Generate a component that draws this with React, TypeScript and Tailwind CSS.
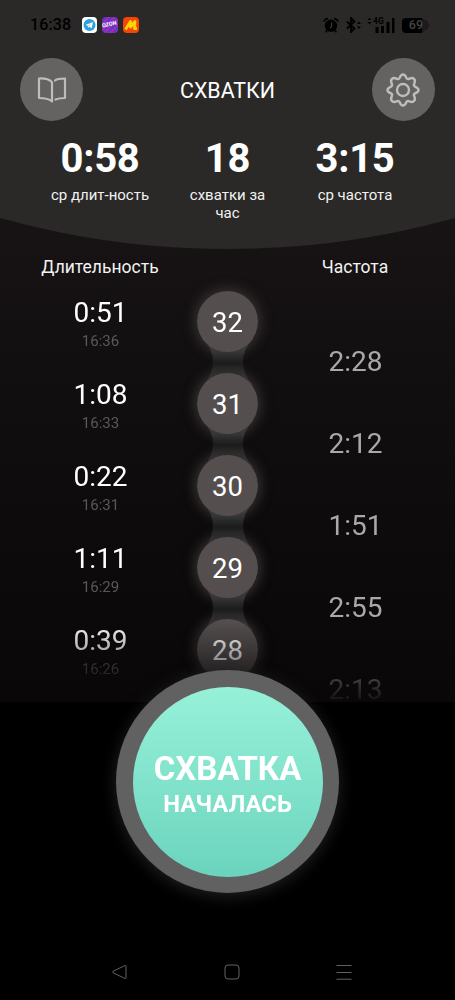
import React from "react";

const rows = [
  { n: 32, duration: "0:51", time: "16:36", gap: "2:28" },
  { n: 31, duration: "1:08", time: "16:33", gap: "2:12" },
  { n: 30, duration: "0:22", time: "16:31", gap: "1:51" },
  { n: 29, duration: "1:11", time: "16:29", gap: "2:55" },
  { n: 28, duration: "0:39", time: "16:26", gap: "2:13" },
];

function StatusBar() {
  return (
    <div className="flex h-[50px] items-center pl-[30px] pr-[25px] text-black">
      <span className="w-[52px] text-[16px] leading-none font-medium tracking-[0.1px]">16:38</span>
      <div className="flex gap-[5px]">
        <svg width="15" height="16" viewBox="0 0 15 16">
          <rect width="15" height="16" rx="4" fill="#fff" />
          <circle cx="7.5" cy="8" r="6" fill="#2ea0da" />
          <path d="M3.5 8 11 5l-1.3 6.3-2.5-1.6-1.1 1.1-.3-2z" fill="#fff" />
          <path d="m5.8 8.8 3.5-2.4-2.7 3z" fill="#8ac8ea" />
        </svg>
        <div className="flex h-4 w-[15.5px] items-center justify-center overflow-hidden rounded bg-[repeating-linear-gradient(135deg,#a32bb0_0_2px,#5b37cf_2px_4px)]">
          <span className="-rotate-12 text-[5.5px] leading-none font-bold text-white">OZON</span>
        </div>
        <svg width="16" height="16" viewBox="0 0 16 16">
          <rect width="16" height="16" rx="4" fill="#f5450b" />
          <path d="M2.500 12.500 7.500 4.500V10L12 4.500 11.500 11.500H14" fill="none" stroke="#ffd500" strokeWidth="2.800" strokeLinejoin="round" />
        </svg>
      </div>
      <div className="ml-auto flex items-center">
        <svg width="16" height="16" viewBox="0 0 16 16">
          <circle cx="8" cy="8.8" r="6.2" fill="#000" />
          <path d="M.9 4.6Q2 1.8 5 1.5M15.1 4.6Q14 1.8 11 1.5M4 13.5l-1.4 1.9M12 13.5l1.4 1.9" stroke="#000" strokeWidth="1.6" fill="none" />
          <path d="M8.6 5.5v4L7 11" stroke="#3a3a38" strokeWidth="1.2" fill="none" />
        </svg>
        <svg className="ml-[7px]" width="16" height="16" viewBox="0 0 16 16">
          <path d="m1 4.5 7.5 7L5 15V1l3.5 3.5-7.5 7" stroke="#000" strokeWidth="1.8" fill="none" />
          <path d="m11 7 2-2.5L15 7zm0 2.5h4L13 12z" fill="#000" />
        </svg>
        <svg className="ml-[5px]" width="28" height="16" viewBox="0 0 28 16">
          <path d="M.5 3 2.5.8 4.500 3zm0 2h4l-2 2.200z" fill="#000" />
          <text x="6" y="7" fontSize="8.5" fontWeight="700" fill="#000" fontFamily="Roboto, sans-serif">4G</text>
          <path d="M8.500 10h3v6h-3zM14 9h3v7h-3zM19.500 5h3v11h-3zM25 1h2.500v15H25z" fill="#000" />
        </svg>
        <div className="ml-[7px] flex items-center">
          <div className="flex h-[15px] w-[23px] items-center justify-end overflow-hidden rounded-[4px] bg-[linear-gradient(90deg,#000_20px,#1d1b1c_20px)] text-[12.5px] leading-none font-medium text-[#454543]">
            <span className="pr-[2px]">69</span>
          </div>
          <svg width="5" height="10" viewBox="0 0 5 10"><path d="M0 0h2l2.500 5L2 10H0z" fill="#1d1b1c" /></svg>
        </div>
      </div>
    </div>
  );
}

function Stat({ value, label }: { value: string; label: string }) {
  return (
    <div className="flex w-[127.5px] flex-col items-center">
      <span className="text-[40px] leading-[48px] font-bold tracking-[-0.3px]">{value}</span>
      <span className="mt-[3px] w-[100px] text-center text-[15px] leading-[18px] text-[#f2f2f2]">{label}</span>
    </div>
  );
}

function Connector() {
  return (
    <svg className="absolute -top-[34px] left-1/2 -z-10 -translate-x-1/2" width="52" height="46" viewBox="0 0 52 46">
      <defs>
        <linearGradient id="neck" x1="0" y1="0" x2="0" y2="1">
          <stop offset="0" stopColor="#454242" />
          <stop offset=".28" stopColor="#363636" />
          <stop offset=".4" stopColor="#272828" />
          <stop offset=".53" stopColor="#1b1b1b" />
          <stop offset=".64" stopColor="#282727" />
          <stop offset="1" stopColor="#3e3a3a" />
        </linearGradient>
      </defs>
      <path d="M1 0Q11 10 11 23T1 46H51Q41 36 41 23T51 0Z" fill="url(#neck)" />
    </svg>
  );
}

export default function App() {
  return (
    <div className="relative flex h-[1000px] w-[455px] flex-col overflow-hidden bg-black font-[Roboto,sans-serif] text-white">
      <div className="flex h-[702px] flex-col bg-[linear-gradient(180deg,#181415_210px,#110e0f_400px,#090708_702px)]">
        <header className="h-[249px] shrink-0 bg-[#2a2927] [clip-path:circle(850px_at_50%_-601px)]">
          <StatusBar />
          <div className="flex items-start justify-between px-[20.4px] pt-[8px]">
            <button className="flex size-[63px] items-center justify-center rounded-full bg-[#646361]">
              <svg width="30" height="28" viewBox="0 0 30 28" fill="none" stroke="#bebdbc" strokeWidth="2.200" strokeLinecap="round" strokeLinejoin="round">
                <path d="M15 25.500Q11 22 2 22V2.500Q11 2 15 6.200Z" />
                <path d="M18 4.500Q20 2.500 28 2.500V22Q22 22 18.500 23.500" />
              </svg>
            </button>
            <h1 className="mt-[20px] text-[21.4px] leading-[26px]">СХВАТКИ</h1>
            <button className="flex size-[63px] items-center justify-center rounded-full bg-[#646361]">
              <svg width="34" height="34" viewBox="0 0 34 34" fill="none" stroke="#bebdbc" strokeWidth="2.400" strokeLinejoin="round">
                <path d="M17 1.500C19 1.500 19.500 3 20.400 5C21 6.200 22 6.400 23.500 5.700C25.500 4.800 27 4.800 28 6C29.200 7 29.200 8.500 28.300 10.500C27.600 12 27.800 13 29 13.600C31 14.500 32.500 15 32.500 17C32.500 19 31 19.500 29 20.400C27.800 21 27.600 22 28.300 23.500C29.200 25.500 29.200 27 28 28C27 29.200 25.500 29.200 23.500 28.300C22 27.600 21 27.800 20.400 29C19.500 31 19 32.500 17 32.500C15 32.500 14.500 31 13.600 29C13 27.800 12 27.600 10.500 28.300C8.500 29.200 7 29.200 6 28C4.800 27 4.800 25.500 5.700 23.500C6.400 22 6.200 21 5 20.400C3 19.500 1.500 19 1.500 17C1.500 15 3 14.500 5 13.600C6.200 13 6.400 12 5.700 10.500C4.800 8.500 4.800 7 6 6C7 4.800 8.500 4.800 10.500 5.700C12 6.400 13 6.200 13.600 5C14.500 3 15 1.500 17 1.500Z" />
                <circle cx="17" cy="17" r="6" />
              </svg>
            </button>
          </div>
          <div className="mt-[14px] flex justify-center">
            <Stat value="0:58" label="ср длит-ность" />
            <Stat value="18" label="схватки за час" />
            <Stat value="3:15" label="ср частота" />
          </div>
        </header>
        <div className="flex h-[42px] shrink-0 justify-between px-[36px] pt-[7px] text-[17.500px] leading-[22px] text-[#f2f2f2]">
          <span className="w-[128px] text-center">Длительность</span>
          <span className="w-[128px] text-center">Частота</span>
        </div>
        <div className="isolate -mt-[24px] flex h-[444px] shrink-0 flex-col pt-[24px] [mask-image:linear-gradient(180deg,#000_355px,#0000_440px)]">
          {rows.map((row, i) => (
            <div key={row.n} className="flex h-[82px] shrink-0 justify-between px-[36px]">
              <div className="flex w-[128px] flex-col items-center pt-[4px]">
                <span className="pl-px text-[28px] leading-[36px]">{row.duration}</span>
                <span className="mt-[1px] pl-px text-[15px] leading-[18px] text-[#5a5858]">{row.time}</span>
              </div>
              <div className="relative h-[61px] w-[61px]">
                <div className="absolute inset-0 -z-20 rounded-full shadow-[0_0_12px_3px_#353131]" />
                {i > 0 && <Connector />}
                <div className="flex size-[61px] items-center justify-center rounded-full bg-[#544e4e] pt-[3px] text-[27.5px] leading-none">{row.n}</div>
              </div>
              <div className="flex w-[128px] justify-center pt-[53px]">
                <span className="pl-px text-[28px] leading-[36px] text-[#aaa8a8]">{row.gap}</span>
              </div>
            </div>
          ))}
        </div>
      </div>
      <div className="absolute left-[116px] top-[670px] flex size-[223px] items-center justify-center rounded-full bg-[#616161] shadow-[0_3px_16px_0_#222222]">
        <button className="flex size-[190px] flex-col items-center justify-center rounded-full bg-linear-to-b from-[#97f1d9] to-[#6bd4bd] pt-[7px] font-bold">
          <span className="text-[33px] leading-[37px]">СХВАТКА</span>
          <span className="text-[23.8px] leading-[34px]">НАЧАЛАСЬ</span>
        </button>
      </div>
      <nav className="mt-auto flex h-[56px] items-center justify-between pl-[111px] pr-[103px]">
        <svg width="16" height="16" viewBox="0 0 16 16" fill="none" stroke="#626262"><path d="M14 1.500 2 7.300Q1 8 2 8.700L14 14.500Q15 14.700 15 13.500V2.500Q15 1.300 14 1.500Z" /></svg>
        <svg width="16" height="16" viewBox="0 0 16 16" fill="none" stroke="#626262"><rect x="1" y="1" width="14" height="14" rx="3" /></svg>
        <svg width="16" height="16" viewBox="0 0 16 16" fill="none" stroke="#626262"><path d="M.5 1.500h15M.5 8.500h15M.5 15.200h15" /></svg>
      </nav>
    </div>
  );
}
